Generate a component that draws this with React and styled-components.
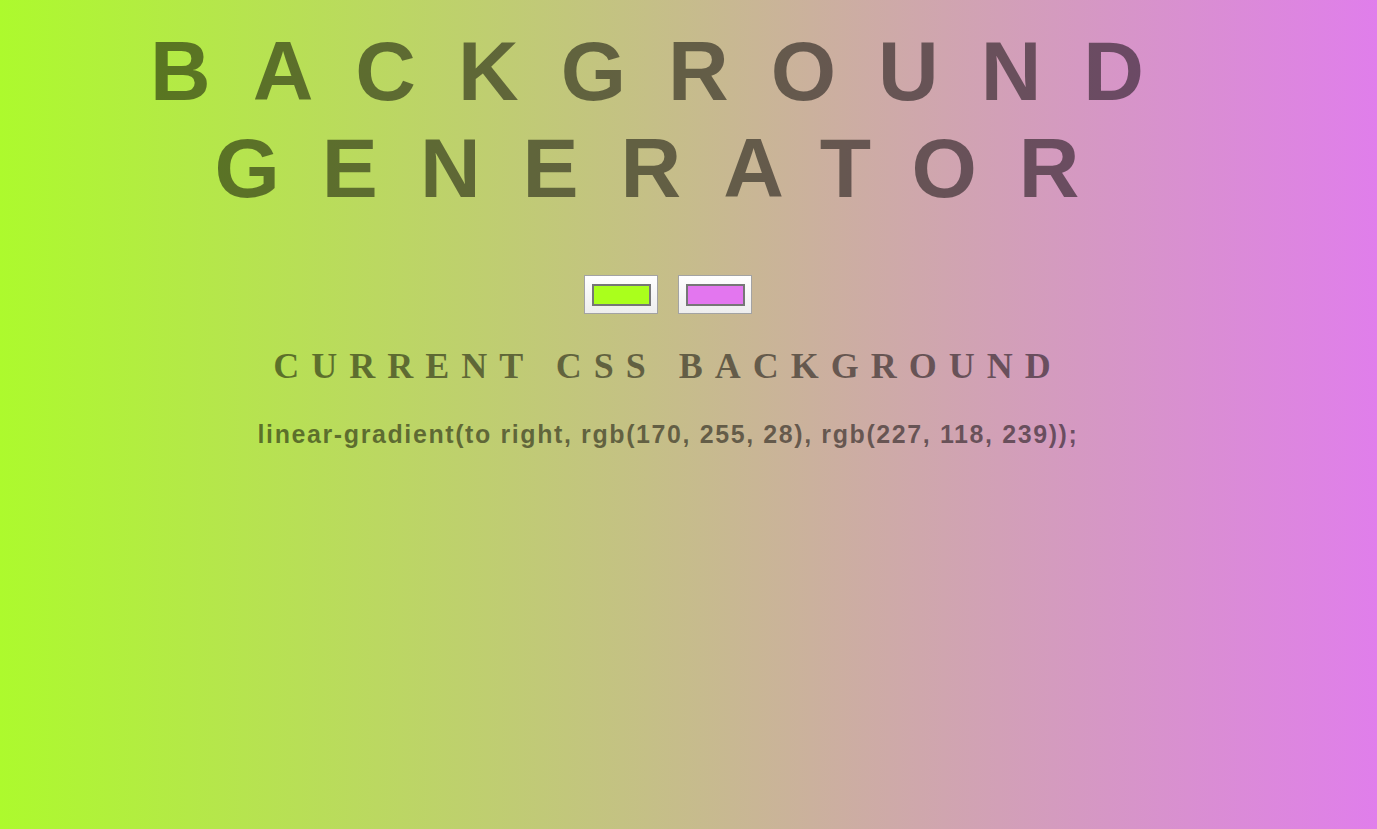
import React, { useState } from 'react'
import styled, { createGlobalStyle } from 'styled-components'

const GlobalStyle = createGlobalStyle`
  html, body {
    margin: 0;
    padding: 0;
  }
`

const toRgb = hex => {
  const n = parseInt(hex.slice(1), 16)
  return `rgb(${(n >> 16) & 255}, ${(n >> 8) & 255}, ${n & 255})`
}

// the screenshot shows the gradient a little muted at both ends
const mute = hex => {
  const n = parseInt(hex.slice(1), 16)
  const c = [(n >> 16) & 255, (n >> 8) & 255, n & 255]
  const m = c.map(v => Math.round(v * 0.9 + 200 * 0.1))
  return `rgb(${m.join(', ')})`
}

const Page = styled.div`
  min-height: 100vh;
  overflow: hidden;
  color: rgba(0, 0, 0, 0.5);
`

const Content = styled.div`
  width: 1320px;
  margin-left: 8px;
  display: flex;
  flex-direction: column;
  align-items: center;
  text-align: center;
`

const Title = styled.h1`
  margin: 23px 0 0;
  font: 700 84px/97px 'Liberation Sans', Arial, sans-serif;
  letter-spacing: 42px;
  text-transform: uppercase;
  width: 1100px;
`

const Pickers = styled.div`
  display: flex;
  gap: 20px;
  margin-top: 58px;
`

const Picker = styled.label`
  position: relative;
  box-sizing: border-box;
  width: 74px;
  height: 39px;
  display: flex;
  align-items: center;
  justify-content: center;
  border: 1px solid #a3a3a3;
  background: linear-gradient(#ffffff, #ededed);
  cursor: pointer;
`

const Swatch = styled.span`
  box-sizing: border-box;
  width: 59px;
  height: 22px;
  border: 2px solid #767676;
  background: ${props => props.color};
`

const HiddenInput = styled.input`
  position: absolute;
  inset: 0;
  width: 100%;
  height: 100%;
  opacity: 0;
  cursor: pointer;
`

const Subtitle = styled.h3`
  margin: 31px 0 0;
  font: 700 36px/42px 'Liberation Serif', 'Times New Roman', serif;
  letter-spacing: 12px;
  text-transform: uppercase;
`

const Code = styled.h3`
  margin: 33px 0 0;
  font: 700 25px/28px 'Liberation Sans', Arial, sans-serif;
  letter-spacing: 1.6px;
`

export default function App() {
  const [left, setLeft] = useState('#aaff1c')
  const [right, setRight] = useState('#e376ef')

  const css = `linear-gradient(to right, ${toRgb(left)}, ${toRgb(right)})`
  const shown = `linear-gradient(to right, ${mute(left)}, ${mute(right)})`

  return (
    <Page style={{ background: shown }}>
      <GlobalStyle />
      <Content>
        <Title>Background Generator</Title>
        <Pickers>
          <Picker>
            <Swatch color={left} />
            <HiddenInput type="color" value={left} onChange={e => setLeft(e.target.value)} />
          </Picker>
          <Picker>
            <Swatch color={right} />
            <HiddenInput type="color" value={right} onChange={e => setRight(e.target.value)} />
          </Picker>
        </Pickers>
        <Subtitle>Current CSS Background</Subtitle>
        <Code>{css};</Code>
      </Content>
    </Page>
  )
}
